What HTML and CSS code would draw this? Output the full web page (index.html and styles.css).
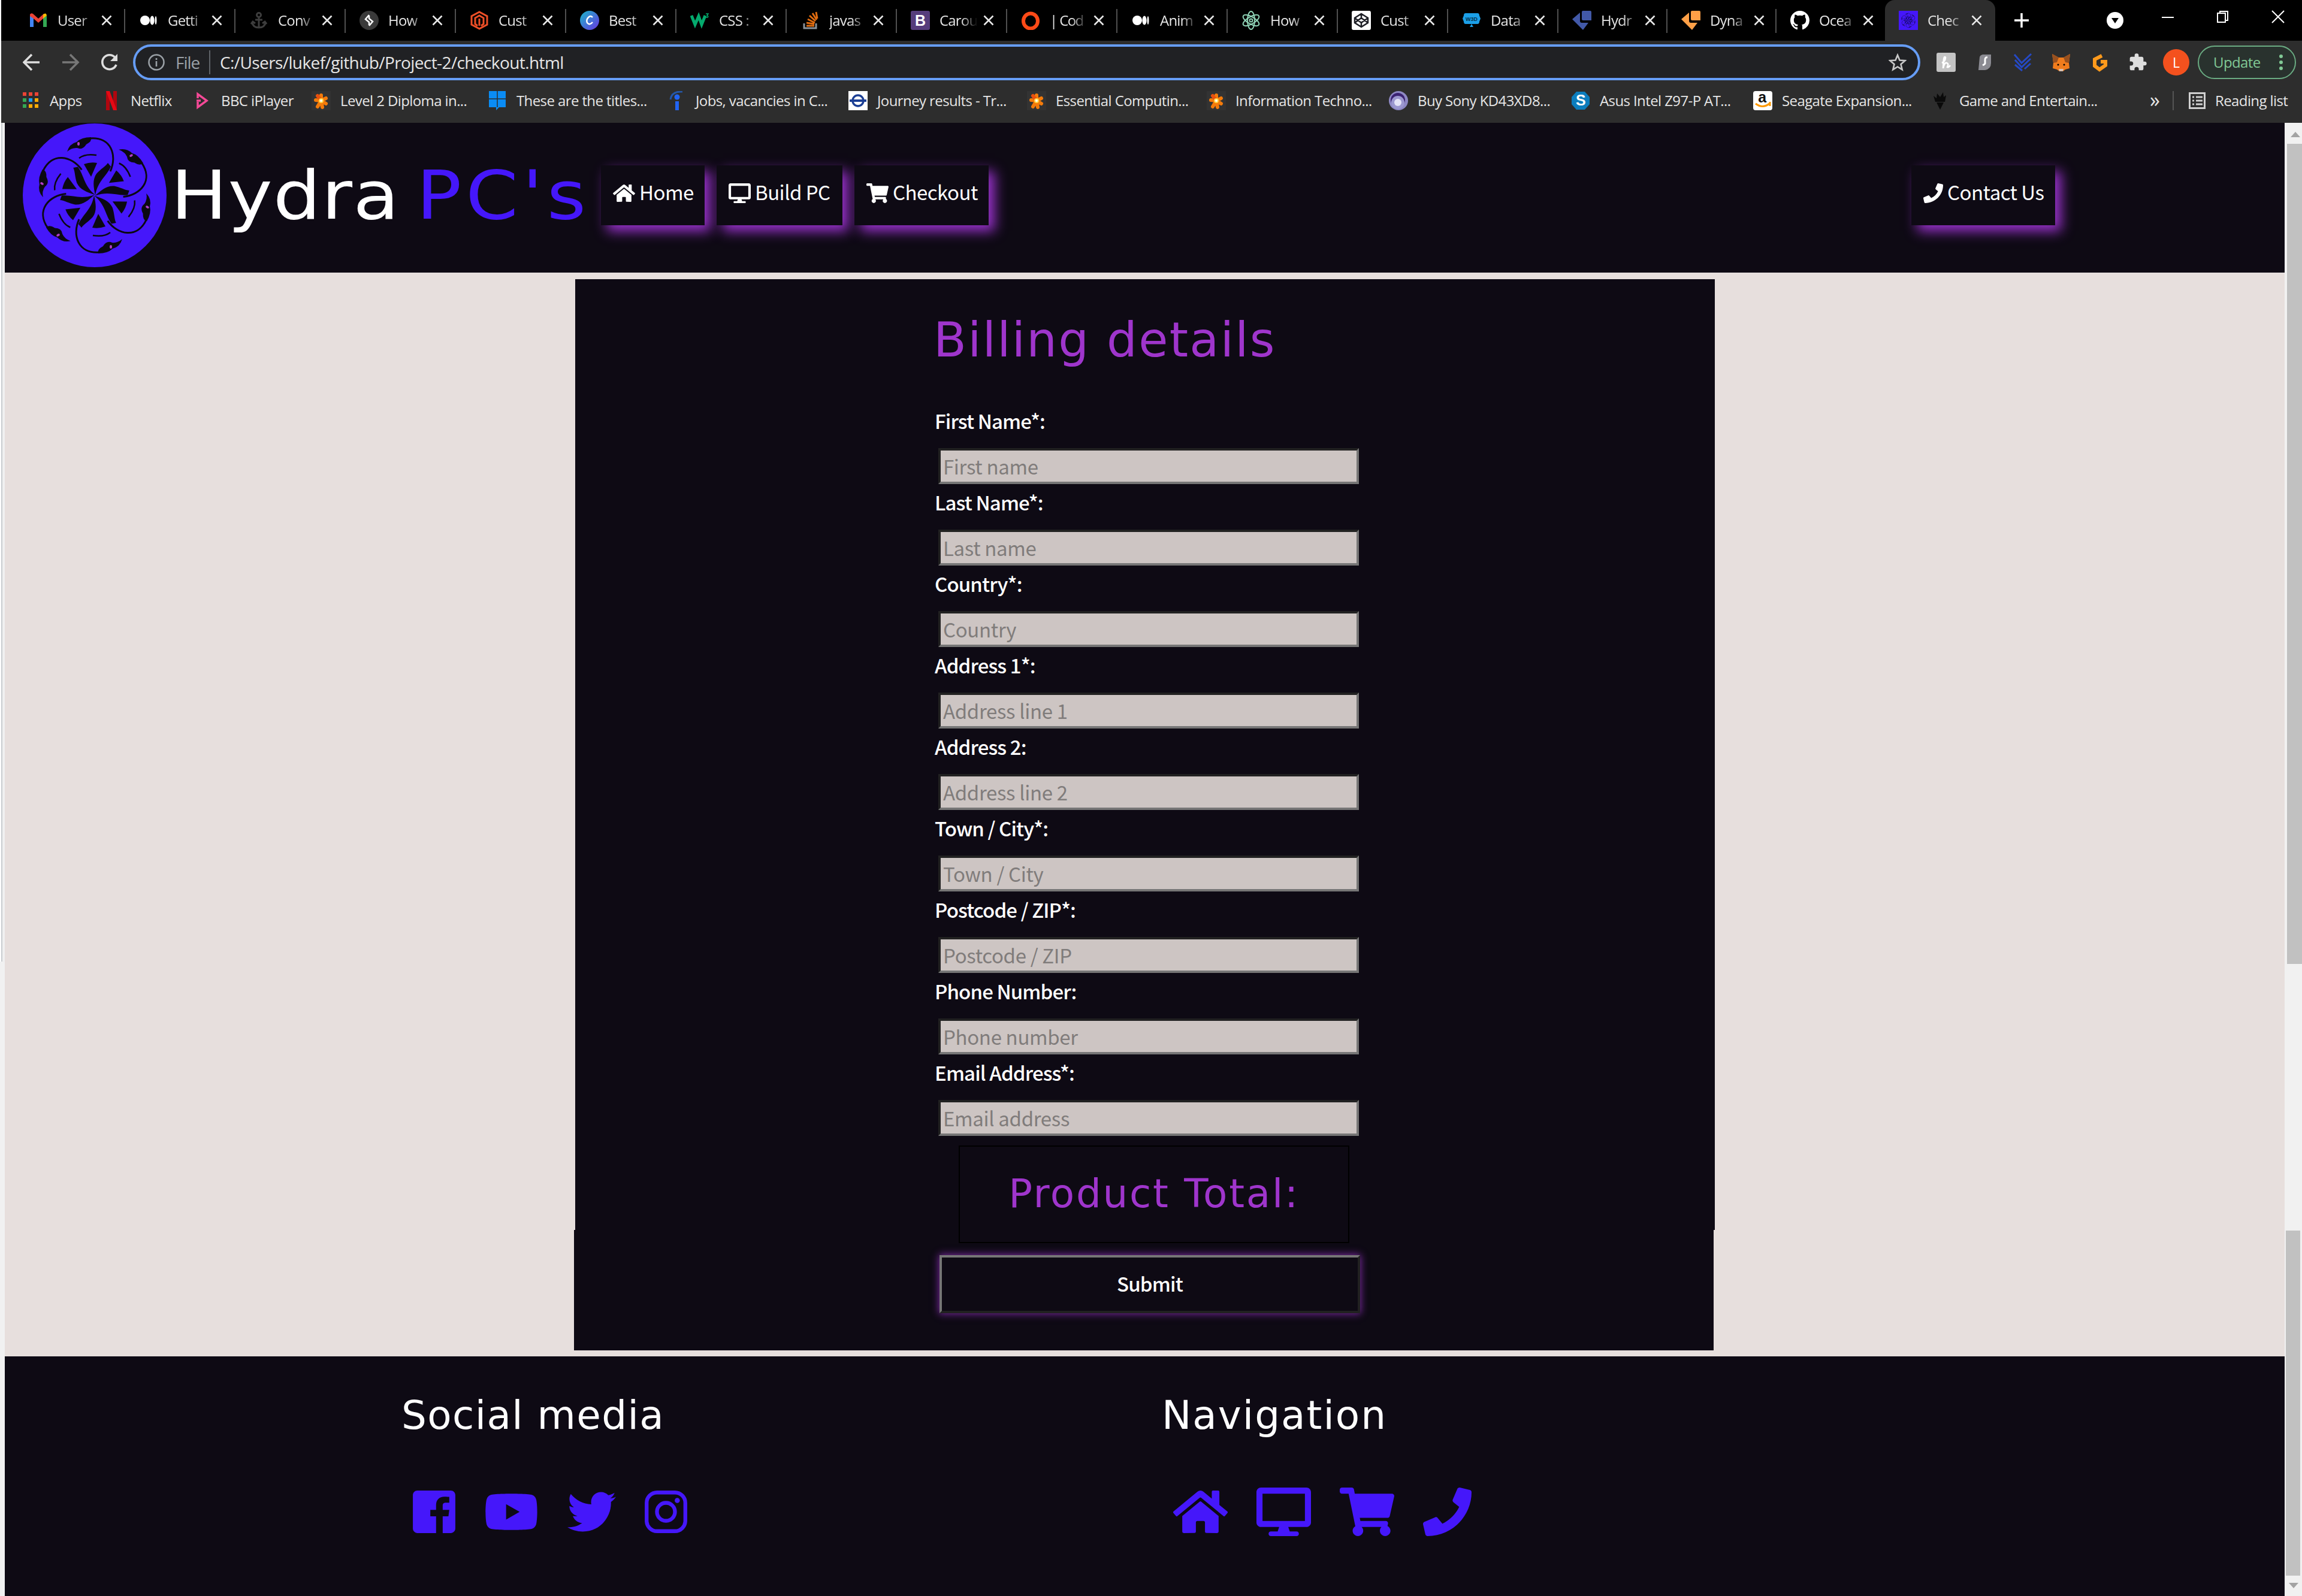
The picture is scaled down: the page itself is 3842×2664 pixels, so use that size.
FILE: index.html
```html
<!DOCTYPE html>
<html lang="en">
<head>
<meta charset="utf-8">
<title>Checkout</title>
<link rel="stylesheet" href="styles.css">
</head>
<body>
<svg width="0" height="0" class="defs">
  <symbol id="home" viewBox="0 0 576 512"><path d="M280.37 148.26L96 300.11V464a16 16 0 0 0 16 16l112.06-.29a16 16 0 0 0 15.92-16V368a16 16 0 0 1 16-16h64a16 16 0 0 1 16 16v95.64a16 16 0 0 0 16 16.05L464 480a16 16 0 0 0 16-16V300L295.67 148.26a12.19 12.19 0 0 0-15.3 0zM571.6 251.47L488 182.56V44.05a12 12 0 0 0-12-12h-56a12 12 0 0 0-12 12v72.61L318.47 43a48 48 0 0 0-61 0L4.34 251.47a12 12 0 0 0-1.6 16.9l25.5 31A12 12 0 0 0 45.15 301l235.22-193.74a12.19 12.19 0 0 1 15.3 0L530.9 301a12 12 0 0 0 16.9-1.6l25.5-31a12 12 0 0 0-1.7-16.93z"/></symbol>
  <symbol id="desktop" viewBox="0 0 576 512"><path d="M528 0H48C21.500 0 0 21.500 0 48v320c0 26.500 21.500 48 48 48h192l-16 48h-72c-13.300 0-24 10.700-24 24s10.700 24 24 24h272c13.300 0 24-10.700 24-24s-10.700-24-24-24h-72l-16-48h192c26.500 0 48-21.500 48-48V48c0-26.500-21.500-48-48-48zm-16 352H64V64h448v288z"/></symbol>
  <symbol id="cart" viewBox="0 0 576 512"><path d="M528.12 301.319l47.273-208C578.806 78.301 567.391 64 551.99 64H159.208l-9.166-44.81C147.758 8.021 137.93 0 126.529 0H24C10.745 0 0 10.745 0 24v16c0 13.255 10.745 24 24 24h69.883l70.248 343.435C147.325 417.1 136 435.222 136 456c0 30.928 25.072 56 56 56s56-25.072 56-56c0-15.674-6.447-29.835-16.824-40h209.647C430.447 426.165 424 440.326 424 456c0 30.928 25.072 56 56 56s56-25.072 56-56c0-22.172-12.888-41.332-31.579-50.405l5.517-24.276c3.413-15.018-8.002-29.319-23.403-29.319H218.117l-6.545-32h293.145c11.206 0 20.92-7.754 23.403-18.681z"/></symbol>
  <symbol id="phone" viewBox="0 0 512 512"><path d="M493.4 24.6l-104-24c-11.3-2.6-22.9 3.3-27.5 13.9l-48 112c-4.2 9.8-1.4 21.3 6.9 28l60.6 49.6c-36 76.7-98.9 140.5-177.2 177.2l-49.6-60.6c-6.8-8.3-18.2-11.1-28-6.9l-112 48C3.9 366.5-2 378.1.6 389.4l24 104C27.1 504.2 36.7 512 48 512c256.1 0 464-207.5 464-464 0-11.2-7.7-20.9-18.6-23.4z"/></symbol>
  <symbol id="facebook" viewBox="0 0 448 512"><path d="M448 80v352c0 26.5-21.5 48-48 48h-85.3V302.8h60.6l8.7-67.6h-69.3V192c0-19.6 5.4-32.9 33.5-32.9H384V98.7c-6.2-.8-27.4-2.7-52.2-2.7-51.6 0-87 31.5-87 89.400v49.900H184v67.600h60.900V480H48c-26.500 0-48-21.500-48-48V80c0-26.500 21.500-48 48-48h352c26.500 0 48 21.500 48 48z"/></symbol>
  <symbol id="youtube" viewBox="0 0 576 512"><path d="M549.655 124.083c-6.281-23.65-24.787-42.276-48.284-48.597C458.781 64 288 64 288 64S117.22 64 74.629 75.486c-23.497 6.322-42.003 24.947-48.284 48.597-11.412 42.867-11.412 132.305-11.412 132.305s0 89.438 11.412 132.305c6.281 23.65 24.787 41.5 48.284 47.821C117.22 448 288 448 288 448s170.78 0 213.371-11.486c23.497-6.321 42.003-24.171 48.284-47.821 11.412-42.867 11.412-132.305 11.412-132.305s0-89.438-11.412-132.305zm-317.51 213.508V175.185l142.739 81.205-142.739 81.201z"/></symbol>
  <symbol id="twitter" viewBox="0 0 512 512"><path d="M459.37 151.716c.325 4.548.325 9.097.325 13.645 0 138.72-105.583 298.558-298.558 298.558-59.452 0-114.68-17.219-161.137-47.106 8.447.974 16.568 1.299 25.34 1.299 49.055 0 94.213-16.568 130.274-44.832-46.132-.975-84.792-31.188-98.112-72.772 6.498.974 12.995 1.624 19.818 1.624 9.421 0 18.843-1.3 27.614-3.573-48.081-9.747-84.143-51.98-84.143-102.985v-1.299c13.969 7.797 30.214 12.67 47.431 13.319-28.264-18.843-46.781-51.005-46.781-87.391 0-19.492 5.197-37.36 14.294-52.954 51.655 63.675 129.3 105.258 216.365 109.807-1.624-7.797-2.599-15.918-2.599-24.04 0-57.828 46.782-104.934 104.934-104.934 30.213 0 57.502 12.67 76.67 33.137 23.715-4.548 46.456-13.32 66.599-25.34-7.798 24.366-24.366 44.833-46.132 57.827 21.117-2.273 41.584-8.122 60.426-16.243-14.292 20.791-32.161 39.308-52.628 54.253z"/></symbol>
  <symbol id="instagram" viewBox="0 0 448 512"><g fill="none" stroke="currentColor" stroke-width="40"><rect x="20" y="52" width="408" height="408" rx="110"/><circle cx="224" cy="256" r="95"/></g><circle cx="343" cy="136" r="27"/></symbol>
  <symbol id="close" viewBox="0 0 18 18"><path d="M1.500 1.500l15 15M16.500 1.500l-15 15" stroke="#e8e8e8" stroke-width="2.600" fill="none"/></symbol>
  <symbol id="medium" viewBox="0 0 32 32"><g fill="#fff"><circle cx="10" cy="16" r="8"/><ellipse cx="22" cy="16" rx="3.600" ry="7.500"/><ellipse cx="28" cy="16" rx="1.500" ry="7"/></g></symbol>
  <symbol id="flower" viewBox="0 0 32 32"><rect width="32" height="32" fill="#333"/><g stroke="#f47b0a" stroke-width="6" stroke-linecap="round"><path d="M16 16V7M16 16l8-4M16 16l8 5M16 16l2 11M16 16l-6 10M16 16l-9-1"/><path d="M16 16L10 8" stroke="#e8500e"/></g><circle cx="16" cy="16" r="4" fill="#ffd84a"/><circle cx="16" cy="16" r="2" fill="#fff"/></symbol>
  <symbol id="arrowtag" viewBox="0 0 32 32"><path d="M18 0h12q2 0 2 2v14H18q-2 0-2-2V2q0-2 2-2zM13 3v14q0 3 3 3h11l-9 12L0 14z"/></symbol>
  <symbol id="hydra" viewBox="-120 -120 240 240">
    <g id="arm"><path d="M-46-73Q-42-86-30-89Q-22-97-6-97Q-4-90-14-85Q-20-75-29-79Q-38-80-46-73z"/><path d="M-8-95C28-98 38-66 26-40" fill="none" stroke="#0b0911" stroke-width="3"/><path d="M27-48C20-32 5-24 1 0C-2-14-4-26 3-36C10-44 18-48 22-54z"/><path d="M-18-52Q-7-56 4-54L-6-31z"/><path d="M-26-62Q-16-70 3-67" fill="none" stroke="#0b0911" stroke-width="2.500"/><ellipse cx="-27" cy="-86" rx="2" ry="3" fill="#b13cc8"/></g>
    <use href="#arm" transform="rotate(60)"/><use href="#arm" transform="rotate(120)"/><use href="#arm" transform="rotate(180)"/><use href="#arm" transform="rotate(240)"/><use href="#arm" transform="rotate(300)"/>
  </symbol>
</svg>

<div class="browser">
  <div class="tabs">
    <div class="tab"><svg class="fav" viewBox="0 0 32 32"><path d="M2 27V8l6 4v15z" fill="#4285f4"/><path d="M24 12l6-4v19h-6z" fill="#34a853"/><path d="M2 9V6q2-3 5-1l9 8 9-8-1 8-8 7-8-7z" fill="#ea4335"/><path d="M24 6q5-4 6 2l-6 5z" fill="#fbbc04"/></svg><span class="name">User</span><svg class="x"><use href="#close"/></svg></div>
    <div class="tab"><svg class="fav"><use href="#medium"/></svg><span class="name">Getti</span><svg class="x"><use href="#close"/></svg></div>
    <div class="tab"><svg class="fav" viewBox="0 0 32 32" fill="none" stroke="#3d3d3d" stroke-width="3"><circle cx="16" cy="7" r="3.500"/><path d="M16 11v17M10 15h12M5 19q1 9 11 9t11-9M3 22l3-4 4 3M29 22l-3-4-4 3"/></svg><span class="name">Conv</span><svg class="x"><use href="#close"/></svg></div>
    <div class="tab"><svg class="fav" viewBox="0 0 32 32"><circle cx="16" cy="16" r="16" fill="#3a3a3a"/><path d="M16 7l-6 7 6 5v5M16 25l6-7-6-5V8" fill="none" stroke="#fff" stroke-width="2.500"/></svg><span class="name">How</span><svg class="x"><use href="#close"/></svg></div>
    <div class="tab"><svg class="fav" viewBox="0 0 32 32" fill="none" stroke="#ee4f27" stroke-width="3"><path d="M16 30L3 23V9l13-7 13 7v14z"/><path d="M13 25l-4-3V12l7-4 7 4v10l-4 3M16 13v12"/></svg><span class="name">Cust</span><svg class="x"><use href="#close"/></svg></div>
    <div class="tab"><svg class="fav" viewBox="0 0 32 32"><defs><linearGradient id="cv" x2="1" y2="1"><stop stop-color="#1ab7c9"/><stop offset="1" stop-color="#6a35e0"/></linearGradient></defs><circle cx="16" cy="16" r="16" fill="url(#cv)"/><path d="M21 11q-3-4-7 0t-2 9q4 5 9-1" fill="none" stroke="#fff" stroke-width="2.500"/></svg><span class="name">Best</span><svg class="x"><use href="#close"/></svg></div>
    <div class="tab"><svg class="fav" viewBox="0 0 32 32"><path d="M2 8l6 15 6-14 5 14 6-15" fill="none" stroke="#04aa6d" stroke-width="5"/><path d="M26 5h4l-2 3q3 1 1 3h-3" fill="none" stroke="#04aa6d" stroke-width="1.500"/></svg><span class="name">CSS :</span><svg class="x"><use href="#close"/></svg></div>
    <div class="tab"><svg class="fav" viewBox="0 0 32 32" fill="none" stroke-width="3"><path d="M6 21v8h20v-8" stroke="#8a9299"/><path d="M10 25h13M10 20l13 2M12 14l12 6M15 8l10 9M20 4l7 11M26 2l2 11" stroke="#e06c10"/></svg><span class="name">javas</span><svg class="x"><use href="#close"/></svg></div>
    <div class="tab"><svg class="fav" viewBox="0 0 32 32"><rect width="32" height="32" rx="3" fill="#563d7c"/><text x="16" y="25" text-anchor="middle" class="glyph">B</text></svg><span class="name">Carou</span><svg class="x"><use href="#close"/></svg></div>
    <div class="tab"><svg class="fav" viewBox="0 0 32 32"><ellipse cx="16" cy="17" rx="12" ry="12.500" fill="none" stroke="#ff4a17" stroke-width="6"/></svg><span class="name tight">| Cod</span><svg class="x"><use href="#close"/></svg></div>
    <div class="tab"><svg class="fav"><use href="#medium"/></svg><span class="name">Anim</span><svg class="x"><use href="#close"/></svg></div>
    <div class="tab"><svg class="fav" viewBox="0 0 32 32" fill="none" stroke="#8fd3b6" stroke-width="2"><ellipse cx="16" cy="16" rx="6" ry="15"/><ellipse cx="16" cy="16" rx="6" ry="15" transform="rotate(60 16 16)"/><ellipse cx="16" cy="16" rx="6" ry="15" transform="rotate(120 16 16)"/><circle cx="16" cy="16" r="2.500"/></svg><span class="name">How</span><svg class="x"><use href="#close"/></svg></div>
    <div class="tab"><svg class="fav" viewBox="0 0 32 32"><rect width="32" height="32" rx="3" fill="#fff"/><path d="M16 5l11 7v8l-11 7-11-7v-8zM16 5v7M16 20v7M5 12l11 8 11-8M5 20l11-8 11 8" fill="none" stroke="#1e1f26" stroke-width="2.500"/></svg><span class="name">Cust</span><svg class="x"><use href="#close"/></svg></div>
    <div class="tab"><svg class="fav" viewBox="0 0 32 32"><path d="M6 4h20q3 0 3 4l2 5-2 5q0 4-3 4H6q-3 0-3-4l-2-5 2-5q0-4 3-4zM13 27l3-5 3 5z" fill="#1b9fe8"/><text x="16" y="17" text-anchor="middle" class="tiny">W3D</text></svg><span class="name">Data</span><svg class="x"><use href="#close"/></svg></div>
    <div class="tab narrow"><svg class="fav" fill="#4259a8"><use href="#arrowtag"/></svg><span class="name">Hydr</span><svg class="x"><use href="#close"/></svg></div>
    <div class="tab narrow"><svg class="fav" fill="#ffa047"><use href="#arrowtag"/></svg><span class="name">Dyna</span><svg class="x"><use href="#close"/></svg></div>
    <div class="tab narrow last"><svg class="fav" viewBox="0 0 16 16" fill="#fff"><path d="M8 0C3.58 0 0 3.58 0 8c0 3.54 2.29 6.53 5.47 7.59.4.07.55-.17.55-.38 0-.19-.01-.82-.01-1.49-2.01.37-2.53-.49-2.69-.94-.09-.23-.48-.94-.82-1.13-.28-.15-.68-.52-.01-.53.63-.01 1.08.58 1.23.82.72 1.21 1.87.87 2.33.66.07-.52.28-.87.51-1.07-1.78-.2-3.64-.89-3.64-3.95 0-.87.31-1.59.82-2.15-.08-.2-.36-1.02.08-2.12 0 0 .67-.21 2.2.82.64-.18 1.32-.27 2-.27s1.36.09 2 .27c1.53-1.04 2.2-.82 2.2-.82.44 1.100.16 1.920.08 2.120.51.56.82 1.270.82 2.150 0 3.070-1.870 3.750-3.650 3.950.29.25.54.73.54 1.480 0 1.070-.01 1.930-.01 2.200 0 .21.15.46.55.38A8.01 8.01 0 0 0 16 8c0-4.420-3.580-8-8-8z"/></svg><span class="name">Ocea</span><svg class="x"><use href="#close"/></svg></div>
    <div class="tab narrow active"><svg class="fav" viewBox="-16 -16 32 32"><rect x="-16" y="-16" width="32" height="32" fill="#4517fa"/><svg x="-15" y="-15" width="30" height="30" fill="#150a60"><use href="#hydra"/></svg></svg><span class="name">Chec</span><svg class="x"><use href="#close"/></svg></div>
    <svg class="window" viewBox="0 0 512 68" fill="none" stroke="#fff"><path d="M32 34h24M44 22v24" stroke-width="3.500"/><circle cx="200" cy="34" r="14" fill="#fff" stroke="none"/><path d="M194 30h12l-6 9z" fill="#000" stroke="none"/><path d="M278 29h20" stroke-width="2"/><path d="M371 22h13v15h-13zM375 22v-3h13v15h-4" stroke-width="2"/><path d="M462 18l20 20M482 18l-20 20" stroke-width="2"/></svg>
  </div>

  <div class="toolbar">
    <svg class="navicons" viewBox="0 0 160 32" fill="none" stroke="#dedede" stroke-width="3.600"><path d="M28 16H2M15 3L2 16l13 13"/><path d="M66 16h26M79 3l13 13-13 13" stroke="#777"/><path d="M154 8a12 12 0 1 0 2 12"/><path d="M158 2v12h-12z" fill="#dedede" stroke="none"/></svg>
    <div class="address">
      <svg class="info" viewBox="0 0 28 28" fill="none" stroke="#9aa0a6" stroke-width="2.600"><circle cx="14" cy="14" r="12.500"/><path d="M14 12v9M14 7v3"/></svg>
      <span class="scheme">File</span><span class="url">C:/Users/lukef/github/Project-2/checkout.html</span>
      <svg class="star" viewBox="0 0 30 30" fill="none" stroke="#c8c8c8" stroke-width="2.600"><path d="M15 3l3.500 8.500 9 .7-7 6 2.200 9L15 22.500 7.300 27.200l2.200-9-7-6 9-.7z"/></svg>
    </div>
    <div class="extensions">
      <svg viewBox="0 0 32 32"><rect width="32" height="32" rx="3" fill="#c4c4c4"/><path d="M9 17q6-3 6-9-2-3-3 3l-1 15q2-10 6-9t1 7q2 1 5-3" fill="none" stroke="#fff" stroke-width="2.600"/></svg>
      <svg viewBox="0 0 32 32"><path d="M8 7q1-3 5-4h14v14q0 10-10 12H6z" fill="#8b8b92"/><path d="M21 8q-4-1-4 4t0 6-4 3" fill="none" stroke="#fff" stroke-width="3"/></svg>
      <svg viewBox="0 0 32 32" fill="none" stroke="#2549c5" stroke-width="3"><path d="M2 3l12 14L30 2M3 12l11 12 15-14M3 20l12 10M19 27l10-9"/></svg>
      <svg viewBox="0 0 32 32"><path d="M1 2l11 6h8l11-6-2 15 1 9-7 2-4 3h-6l-4-3-7-2 1-9z" fill="#f07c1d"/><path d="M1 2l11 6-3 8-6 1zM31 2L20 8l3 8 6 1z" fill="#98501f"/><path d="M12 27h8l-1 4h-6z" fill="#d7c1b3"/><circle cx="11" cy="20" r="1.500"/><circle cx="21" cy="20" r="1.500"/></svg>
      <svg viewBox="0 0 32 32" fill="none" stroke="#ff9a1c" stroke-width="6"><path d="M20 5L8 11v11l8 6 10-7v-6h-8"/></svg>
      <svg viewBox="0 0 24 24" fill="#dedede"><path d="M20.500 11H19V7c0-1.100-.9-2-2-2h-4V3.500a2.500 2.500 0 0 0-5 0V5H4c-1.100 0-1.990.9-1.990 2v3.800H3.500a2.700 2.700 0 0 1 0 5.400H2V20c0 1.100.9 2 2 2h3.800v-1.500a2.700 2.700 0 0 1 5.400 0V22H17c1.100 0 2-.9 2-2v-4h1.500a2.500 2.500 0 0 0 0-5z"/></svg>
    </div>
    <span class="avatar">L</span>
    <span class="update">Update<i></i></span>
  </div>

  <div class="bookmarks">
    <div><svg viewBox="0 0 32 32"><path d="M3 2h6v6H3zM13 2h6v6h-6zM23 2h6v6h-6z" fill="#ea4335"/><path d="M3 12h6v6H3zM3 22h6v6H3z" fill="#34a853"/><path d="M13 12h6v6h-6z" fill="#1a9cf0"/><path d="M23 12h6v6h-6zM13 22h6v6h-6zM23 22h6v6h-6z" fill="#fbab05"/></svg>Apps</div>
    <div><svg viewBox="0 0 32 32"><path d="M7 0h6v32H7zM19 0h6v32h-6z" fill="#b1060f"/><path d="M7 0h6l12 32h-6z" fill="#e50914"/></svg>Netflix</div>
    <div><svg viewBox="0 0 32 32" fill="none" stroke="#f54997" stroke-width="3.500"><path d="M9 12V5l15 11L9 27V18"/><path d="M7 16h7"/></svg>BBC iPlayer</div>
    <div><svg><use href="#flower"/></svg>Level 2 Diploma in...</div>
    <div><svg viewBox="0 0 32 32"><path d="M2 0h28v27H19l-5 5v-5H2z" fill="#0a8cf5"/><path d="M2 13h28M16 0v27" stroke="#2d2d2d" stroke-width="1.500"/></svg>These are the titles...</div>
    <div><svg viewBox="0 0 32 32"><path d="M6 14q2-14 20-13" fill="none" stroke="#2557a7" stroke-width="3"/><circle cx="17" cy="10" r="4.500" fill="#2164f3"/><path d="M14 17h6v15h-6z" fill="#2164f3"/></svg>Jobs, vacancies in C...</div>
    <div><svg viewBox="0 0 32 32"><path d="M0 0h32v32H0z" fill="#fff"/><circle cx="16" cy="16" r="9" fill="none" stroke="#1c3f94" stroke-width="3.500"/><path d="M2 14h28v4H2z" fill="#1c3f94"/></svg>Journey results - Tr...</div>
    <div><svg><use href="#flower"/></svg>Essential Computin...</div>
    <div><svg><use href="#flower"/></svg>Information Techno...</div>
    <div><svg viewBox="0 0 32 32"><circle cx="16" cy="16" r="16" fill="#8e88c4"/><circle cx="15" cy="15" r="12" fill="#3b2272"/><circle cx="15" cy="19" r="11" fill="#9c98cf"/><circle cx="15" cy="19" r="6" fill="#e4e3f6"/></svg>Buy Sony KD43XD8...</div>
    <div><svg viewBox="0 0 32 32"><path d="M9 1h14l8 9v12l-8 9H9l-8-9V10z" fill="#0c7dbd"/><text x="16" y="24" text-anchor="middle" class="glyph">S</text></svg>Asus Intel Z97-P AT...</div>
    <div><svg viewBox="0 0 32 32"><rect width="32" height="32" rx="4" fill="#fff"/><text x="15" y="19" text-anchor="middle" class="glyph dark">a</text><path d="M4 21q12 9 23 0M28 18v7" fill="none" stroke="#ff9900" stroke-width="3"/></svg>Seagate Expansion...</div>
    <div><svg viewBox="0 0 32 32" fill="#0a0a0a"><path d="M5 8l5 4 1-8 5 6 5-8 1 8 4-3-2 11H8zM10 19h12l-6 12z"/></svg>Game and Entertain...</div>
    <div class="more">»</div>
    <div class="reading"><svg viewBox="0 0 32 32" fill="none" stroke="#d0d0d0" stroke-width="3"><path d="M3.500 3.500h25v25h-25zM8 10h3M8 16h3M8 22h3M14 10h11M14 16h11M14 22h11"/></svg>Reading list</div>
  </div>
</div>

<div class="viewport">
  <div class="page">
    <header class="header">
      <svg class="logo"><use href="#hydra"/></svg>
      <h1 class="brand">Hydra <span>PC's</span></h1>
      <nav class="menu">
        <a class="btn w-home"><svg class="wide"><use href="#home"/></svg>Home</a>
        <a class="btn w-build"><svg class="wide"><use href="#desktop"/></svg>Build PC</a>
        <a class="btn w-check"><svg class="wide"><use href="#cart"/></svg>Checkout</a>
      </nav>
      <a class="btn contact"><svg><use href="#phone"/></svg>Contact Us</a>
    </header>
    <main class="card">
      <form class="form">
        <h2 class="title">Billing details</h2>
        <label>First Name*:<input placeholder="First name"></label>
        <label>Last Name*:<input placeholder="Last name"></label>
        <label>Country*:<input placeholder="Country"></label>
        <label>Address 1*:<input placeholder="Address line 1"></label>
        <label>Address 2:<input placeholder="Address line 2"></label>
        <label>Town / City*:<input placeholder="Town / City"></label>
        <label>Postcode / ZIP*:<input placeholder="Postcode / ZIP"></label>
        <label>Phone Number:<input placeholder="Phone number"></label>
        <label>Email Address*:<input placeholder="Email address"></label>
        <div class="total">Product Total:</div>
        <button class="submit" type="button">Submit</button>
      </form>
    </main>
    <footer class="footer">
      <section class="social"><h3>Social media</h3><div class="icons"><svg class="slim"><use href="#facebook"/></svg><svg class="wide"><use href="#youtube"/></svg><svg><use href="#twitter"/></svg><svg class="slim"><use href="#instagram"/></svg></div></section>
      <section class="links"><h3>Navigation</h3><div class="icons"><svg class="wide"><use href="#home"/></svg><svg class="wide"><use href="#desktop"/></svg><svg class="wide"><use href="#cart"/></svg><svg><use href="#phone"/></svg></div></section>
    </footer>
  </div>
  <div class="scrollbar"><svg class="up" viewBox="0 0 16 9"><path d="M8 0l8 9H0z"/></svg><i class="t1"></i><i class="t2"></i><svg class="down" viewBox="0 0 16 9"><path d="M8 9l8-9H0z"/></svg></div>
</div>
</body>
</html>
```
FILE: styles.css
```css
* { box-sizing: border-box; }
body { margin: 0; width: 3842px; height: 2664px; overflow: hidden; background: #f6f6f6; font-family: "Noto Sans CJK SC", sans-serif; }
.defs { display: block; height: 0; }
svg { flex: none; }

.browser { height: 205px; margin-left: 2px; background: #2d2d2d; font-family: "Open Sans", sans-serif; color: #e6e6e6; }
.tabs { display: flex; height: 68px; padding-left: 23px; background: #000; }
.tab { display: flex; align-items: center; width: 184px; padding-left: 23px; background: linear-gradient(#505050, #505050) 182px 15px / 2px 40px no-repeat; }
.tab.narrow { width: 182px; background-position: 180px 15px; }
.tab.last { background: none; }
.tab.active { width: 184px; margin-left: -1px; background: #2d2d2d; border-radius: 16px 16px 0 0; }
.fav { width: 32px; height: 32px; }
.name { width: 66px; margin-left: 16px; white-space: nowrap; font-size: 24px; line-height: 36px; letter-spacing: -0.8px; -webkit-mask-image: linear-gradient(90deg, #000 55%, transparent 96%); mask-image: linear-gradient(90deg, #000 55%, transparent 96%); }
.name.tight { letter-spacing: -1.6px; }
.x { width: 18px; height: 18px; margin-left: 7px; }
.window { width: 512px; height: 68px; }
.glyph { font: bold 25px "Liberation Sans", sans-serif; fill: #fff; }
.glyph.dark { fill: #111; }
.tiny { font: bold 9px "Liberation Sans", sans-serif; fill: #04314d; }

.toolbar { display: flex; align-items: center; height: 72px; padding-left: 36px; }
.navicons { width: 160px; height: 32px; }
.address { display: flex; align-items: center; width: 2983px; height: 60px; margin-left: 24px; padding: 0 19px 0 21px; border: 4px solid #669df6; border-radius: 30px; background: #202124; font-size: 28px; line-height: 40px; }
.info { width: 28px; height: 28px; }
.scheme { width: 58px; margin-left: 18px; color: #9aa0a6; letter-spacing: -1px; border-right: 2px solid #5f6368; }
.url { margin-left: 16px; letter-spacing: -0.6px; }
.star { width: 30px; height: 30px; margin-left: auto; }
.extensions { display: flex; gap: 32px; margin-left: 27px; }
.extensions svg { width: 32px; height: 32px; }
.avatar { width: 44px; height: 44px; margin-left: 26px; border-radius: 50%; background: #f4511e; color: #fff; font-size: 23px; line-height: 44px; text-align: center; }
.update { display: flex; align-items: center; width: 164px; height: 56px; margin-left: 14px; padding-left: 24px; border: 2px solid #6aab82; border-radius: 28px; background: #29322e; color: #81c995; font-size: 24px; letter-spacing: -0.6px; line-height: 34px; }
.update i { width: 6px; height: 6px; margin-left: 31px; border-radius: 50%; background: #81c995; box-shadow: 0 -10px #81c995, 0 10px #81c995; }

.bookmarks { display: grid; grid-template-columns: 135px 151px 199px 294px 299px 303px 298px 300px 304px 304px 304px 296px 364px 40px 200px; height: 65px; padding: 12px 0 0 33px; font-size: 24px; letter-spacing: -0.6px; line-height: 31px; white-space: nowrap; }
.bookmarks > div { display: flex; gap: 16px; height: 32px; }
.bookmarks svg { width: 32px; height: 32px; }
.bookmarks .more { padding-left: 2px; font-size: 34px; line-height: 28px; }
.bookmarks .reading { gap: 14px; padding-left: 23px; border-left: 2px solid #555; }

.viewport { display: flex; height: 2459px; padding-left: 8px; background: linear-gradient(90deg, #fff 2px, #c8cccf 2px, #c8cccf 4px, #f0f0f0 4px) 0 0 / 8px 1400px no-repeat, #f1f1f1; }
.page { width: 3805px; background: #e7dfdd; }
.header { display: flex; align-items: center; height: 250px; padding: 0 383px 8px 30px; background: #0e0a14; }
.logo { width: 240px; height: 240px; border-radius: 50%; background: #4517fa; fill: #0b0911; }
.brand { width: 718px; margin: 0 0 0 7px; font: 112px/120px "DejaVu Sans", sans-serif; letter-spacing: 1px; word-spacing: -12px; color: #fff; white-space: nowrap; transform: scaleX(1.12); transform-origin: left; }
.brand span { color: #4517fa; letter-spacing: 6px; }
.menu { display: flex; gap: 20px; }
.btn { display: flex; gap: 7px; width: 173px; height: 100px; padding: 20px 0 0 20px; background: #0e0a14; box-shadow: 10px 10px 20px #9932cc; color: #fff; font-size: 33px; letter-spacing: -0.55px; line-height: 48px; white-space: nowrap; }
.btn svg { width: 33px; height: 33px; margin-top: 10px; fill: #fff; }
.btn svg.wide { width: 37px; }
.btn.w-build { width: 210px; }
.btn.w-check { width: 224px; }
.btn.contact { width: 240px; margin-left: auto; }

.card { width: 1904px; height: 1788px; margin: 11px 0 10px 950px; padding: 52px 0 0 602px; background: linear-gradient(#0e0a14, #0e0a14) 2px 0 / 1902px 1587px no-repeat, linear-gradient(#0e0a14, #0e0a14) 0 1587px / 1902px 201px no-repeat; }
.form { width: 714px; }
.title { margin: 0 0 60px -2px; font: 80px/100px "DejaVu Sans", sans-serif; letter-spacing: 2.3px; color: #9f35cc; white-space: nowrap; }
.form label { display: block; height: 136px; color: #fff; font-size: 33px; font-weight: 500; letter-spacing: -0.9px; line-height: 48px; }
.form input { display: block; width: 702px; height: 60px; margin: 22px 0 0 6px; padding: 0 4px; border: 4px solid; border-color: #212121 #767676 #767676 #212121; background: #cdc5c3; font: 400 33px/48px "Noto Sans CJK SC", sans-serif; letter-spacing: -0.35px; }
.form input::placeholder { color: #807c7b; }
.total { width: 652px; height: 163px; margin: 10px 0 0 40px; padding-top: 39px; border: 2px solid #000; font: 66px/80px "DejaVu Sans", sans-serif; letter-spacing: 2.7px; text-align: center; color: #9f35cc; white-space: nowrap; }
.submit { display: block; width: 702px; height: 97px; margin: 20px 0 0 8px; padding: 0 0 3px; border: 4px solid; border-color: #767676 #212121 #212121 #767676; background: #0e0a14; box-shadow: 0 0 12px 1px #7a28a0; color: #fff; font: 500 33px/48px "Noto Sans CJK SC", sans-serif; letter-spacing: -0.8px; }

.footer { display: flex; height: 400px; padding: 59px 0 0 658px; background: #0e0a14; }
.social { width: 1269px; }
.footer h3 { margin: 0 0 0 4px; font: 66px/80px "DejaVu Sans", sans-serif; letter-spacing: 1.4px; color: #fff; }
.footer .links h3 { letter-spacing: 2px; }
.icons { display: flex; gap: 48px; padding: 80px 0 0 23px; color: #4517fa; }
.icons svg { width: 81px; height: 81px; fill: #4517fa; }
.icons svg.slim { width: 71px; }
.icons svg.wide { width: 91px; }

.scrollbar { width: 29px; padding: 15px 0 0 4px; }
.scrollbar svg { display: block; width: 16px; height: 9px; margin-left: 6px; fill: #a3a3a3; }
.scrollbar i { display: block; width: 25px; background: #c1c1c1; }
.t1 { height: 1369px; margin-top: 11px; }
.scrollbar .t2 { width: 24px; height: 576px; margin: 445px 0 12px -2px; }
.scrollbar .down { margin-left: 3px; }
```
